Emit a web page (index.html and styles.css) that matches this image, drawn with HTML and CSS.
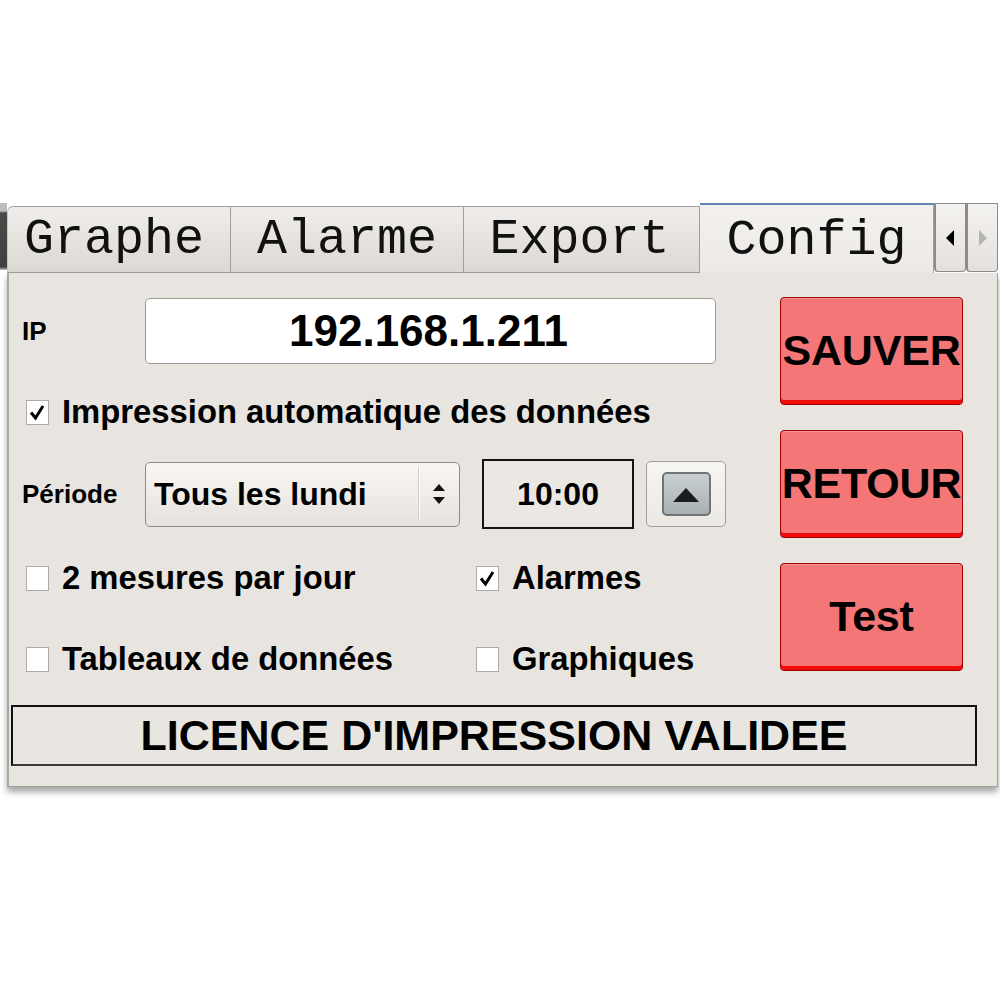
FILE: index.html
```html
<!DOCTYPE html>
<html lang="fr">
<head>
<meta charset="utf-8">
<title>Config</title>
<link rel="stylesheet" href="styles.css">
</head>
<body>
<div class="window">
  <div class="tabbar">
    <div class="tab-edge"></div>
    <div class="tab tab-first">Graphe</div>
    <div class="tab">Alarme</div>
    <div class="tab">Export</div>
    <div class="tab active">Config</div>
    <div class="scroll-btn"><svg width="9" height="16" viewBox="0 0 9 16"><path d="M8 0 L0 8 L8 16 Z" fill="#000"/></svg></div>
    <div class="scroll-btn"><svg width="9" height="16" viewBox="0 0 9 16"><path d="M1 0 L9 8 L1 16 Z" fill="#b4b4b4"/></svg></div>
  </div>
  <div class="panel">
    <div class="main">
      <div class="form">
        <div class="row row-ip">
          <span class="label">IP</span>
          <div class="ip-field">192.168.1.211</div>
        </div>
        <div class="row row-check">
          <div class="check-item">
            <span class="cb"><svg width="21" height="23" viewBox="0 0 21 23"><path d="M4 11.5 L8.5 17 L16 5" fill="none" stroke="#000" stroke-width="3"/></svg></span>
            <span class="cb-text">Impression automatique des données</span>
          </div>
        </div>
        <div class="row row-period">
          <span class="label">Période</span>
          <div class="combo">
            <span class="combo-text">Tous les lundi</span>
            <span class="combo-sep"></span>
            <span class="combo-arrows"><svg width="14" height="24" viewBox="0 0 14 24"><path d="M7 2 L13 9 L1 9 Z M7 22 L13 15 L1 15 Z" fill="#111"/></svg></span>
          </div>
          <div class="time">10:00</div>
          <div class="spin"><div class="spin-inner"><svg width="26" height="14" viewBox="0 0 26 14"><path d="M13 0 L26 14 L0 14 Z" fill="#1c1c1c"/></svg></div></div>
        </div>
        <div class="row row-opts">
          <div class="check-item col1">
            <span class="cb"></span>
            <span class="cb-text">2 mesures par jour</span>
          </div>
          <div class="check-item">
            <span class="cb"><svg width="21" height="23" viewBox="0 0 21 23"><path d="M4 11.5 L8.5 17 L16 5" fill="none" stroke="#000" stroke-width="3"/></svg></span>
            <span class="cb-text">Alarmes</span>
          </div>
        </div>
        <div class="row row-opts row-opts2">
          <div class="check-item col1">
            <span class="cb"></span>
            <span class="cb-text">Tableaux de données</span>
          </div>
          <div class="check-item">
            <span class="cb"></span>
            <span class="cb-text">Graphiques</span>
          </div>
        </div>
      </div>
      <div class="buttons">
        <div class="red-btn">SAUVER</div>
        <div class="red-btn">RETOUR</div>
        <div class="red-btn">Test</div>
      </div>
    </div>
    <div class="licence">LICENCE D'IMPRESSION VALIDEE</div>
  </div>
</div>
</body>
</html>
```

FILE: styles.css
```css
html, body {
  margin: 0;
  padding: 0;
  background: #ffffff;
}
body {
  width: 1000px;
  height: 1000px;
  font-family: "Liberation Sans", Arial, sans-serif;
  color: #000;
}
.window {
  margin-top: 203px;
  width: 1000px;
  display: flex;
  flex-direction: column;
}
.tabbar {
  height: 70px;
  display: flex;
  align-items: flex-start;
}
.tab-edge {
  width: 7px;
  height: 67px;
  background: linear-gradient(to bottom, #bdbdbd 0, #bdbdbd 8px, #4a4a4a 10px, #3f3f3f 64px, #c8c8c8 67px);
}
.tab {
  box-sizing: border-box;
  margin-top: 3px;
  height: 67px;
  width: 233px;
  border: 1px solid #a29e9a;
  border-left: none;
  background: linear-gradient(to bottom, #f0eeeb 0%, #e6e3df 50%, #dcd8d4 100%);
  font-family: "Liberation Mono", "Courier New", monospace;
  font-size: 50px;
  line-height: 66px;
  text-align: center;
  color: #111;
}
.tab-first {
  width: 224px;
  border-left: 1px solid #c8c4c0;
  border-top-left-radius: 6px;
  padding-right: 10px;
}
.tab:nth-child(4) {
  width: 236px;
  padding-right: 4px;
}
.tab.active {
  margin-top: 0;
  height: 70px;
  width: 234px;
  border-top: 2px solid #5f87b4;
  border-bottom: none;
  border-right: 1px solid #a29e9a;
  background: linear-gradient(to bottom, #f3f1ee 0%, #ece9e6 100%);
  line-height: 71px;
}
.scroll-btn {
  box-sizing: border-box;
  width: 32px;
  height: 69px;
  border: 1px solid #8f8b87;
  border-left: 2px solid #8f8b87;
  border-radius: 0 0 4px 4px;
  background: linear-gradient(to bottom, #f4f2f0, #e4e1dd);
  display: flex;
  align-items: center;
  justify-content: center;
}
.panel {
  box-sizing: border-box;
  margin-left: 7px;
  width: 991px;
  background: #e8e4e0;
  border: 1px solid #a29e9a;
  border-top: none;
  border-left: 2px solid #aaa6a2;
  padding-bottom: 20px;
  box-shadow: 0 5px 6px rgba(0, 0, 0, 0.35);
}
.main {
  display: flex;
  padding-top: 24px;
}
.form {
  width: 771px;
  box-sizing: border-box;
  padding-left: 13px;
  padding-top: 1px;
  display: flex;
  flex-direction: column;
}
.row {
  display: flex;
  align-items: center;
}
.label {
  font-weight: bold;
  font-size: 26px;
  width: 123px;
  flex: none;
}
.row-ip {
  height: 66px;
}
.ip-field {
  box-sizing: border-box;
  width: 571px;
  height: 66px;
  background: #fff;
  border: 1px solid #9e9a96;
  border-radius: 5px;
  font-weight: bold;
  font-size: 44px;
  line-height: 64px;
  text-align: center;
  padding-right: 4px;
}
.row-check {
  margin-top: 23px;
  height: 50px;
}
.check-item {
  display: flex;
  align-items: center;
  margin-left: 4px;
}
.cb {
  box-sizing: border-box;
  width: 23px;
  height: 25px;
  background: #fff;
  border: 1px solid #aeaaa6;
  display: flex;
  align-items: center;
  justify-content: center;
  flex: none;
}
.cb-text {
  margin-left: 13px;
  font-weight: bold;
  font-size: 32.8px;
  white-space: nowrap;
}
.row-period {
  margin-top: 22px;
  height: 70px;
}
.combo {
  box-sizing: border-box;
  width: 315px;
  height: 65px;
  border: 1px solid #8f8b87;
  border-radius: 5px;
  background: linear-gradient(to bottom, #f8f6f4 0%, #efece9 50%, #e5e2de 100%);
  display: flex;
  align-items: center;
}
.combo-text {
  font-weight: bold;
  font-size: 32px;
  padding-left: 8px;
  width: 264px;
  white-space: nowrap;
}
.combo-sep {
  width: 1px;
  height: 55px;
  background: #d2ceca;
  border-right: 1px solid #fbfaf9;
}
.combo-arrows {
  flex: 1;
  display: flex;
  justify-content: center;
  padding-right: 2px;
}
.time {
  box-sizing: border-box;
  margin-left: 22px;
  width: 152px;
  height: 70px;
  border: 2px solid #141414;
  background: #ebe7e3;
  font-weight: bold;
  font-size: 32px;
  line-height: 66px;
  text-align: center;
}
.spin {
  box-sizing: border-box;
  margin-left: 12px;
  width: 80px;
  height: 66px;
  border: 1px solid #a29e9a;
  border-radius: 5px;
  background: linear-gradient(to bottom, #f7f5f3, #ebe8e4);
  display: flex;
  align-items: center;
  justify-content: center;
}
.spin-inner {
  box-sizing: border-box;
  width: 49px;
  height: 44px;
  border: 2px solid #6e7477;
  border-radius: 5px;
  background: linear-gradient(to bottom, #c9cfd1, #a9b0b3);
  display: flex;
  align-items: center;
  justify-content: center;
  padding-top: 2px;
}
.row-opts {
  margin-top: 24px;
  height: 50px;
}
.row-opts2 {
  margin-top: 31px;
}
.col1 {
  width: 446px;
  flex: none;
}
.buttons {
  width: 183px;
  display: flex;
  flex-direction: column;
  gap: 25px;
}
.red-btn {
  box-sizing: border-box;
  height: 108px;
  background: #f47676;
  border: 1px solid #9c0000;
  border-radius: 4px;
  box-shadow: inset 0 -4px 0 #f00a0a, inset 0 1px 0 #f69090;
  font-weight: bold;
  font-size: 43px;
  line-height: 104px;
  text-align: center;
  white-space: nowrap;
  overflow: visible;
  letter-spacing: -0.2px;
}
.licence {
  box-sizing: border-box;
  margin-top: 21px;
  margin-left: 2px;
  width: 966px;
  height: 61px;
  border: 2px solid #111;
  border-bottom-color: #3a3a3a;
  background: #e9e5e1;
  font-weight: bold;
  font-size: 43px;
  line-height: 57px;
  text-align: center;
  white-space: nowrap;
}
```
